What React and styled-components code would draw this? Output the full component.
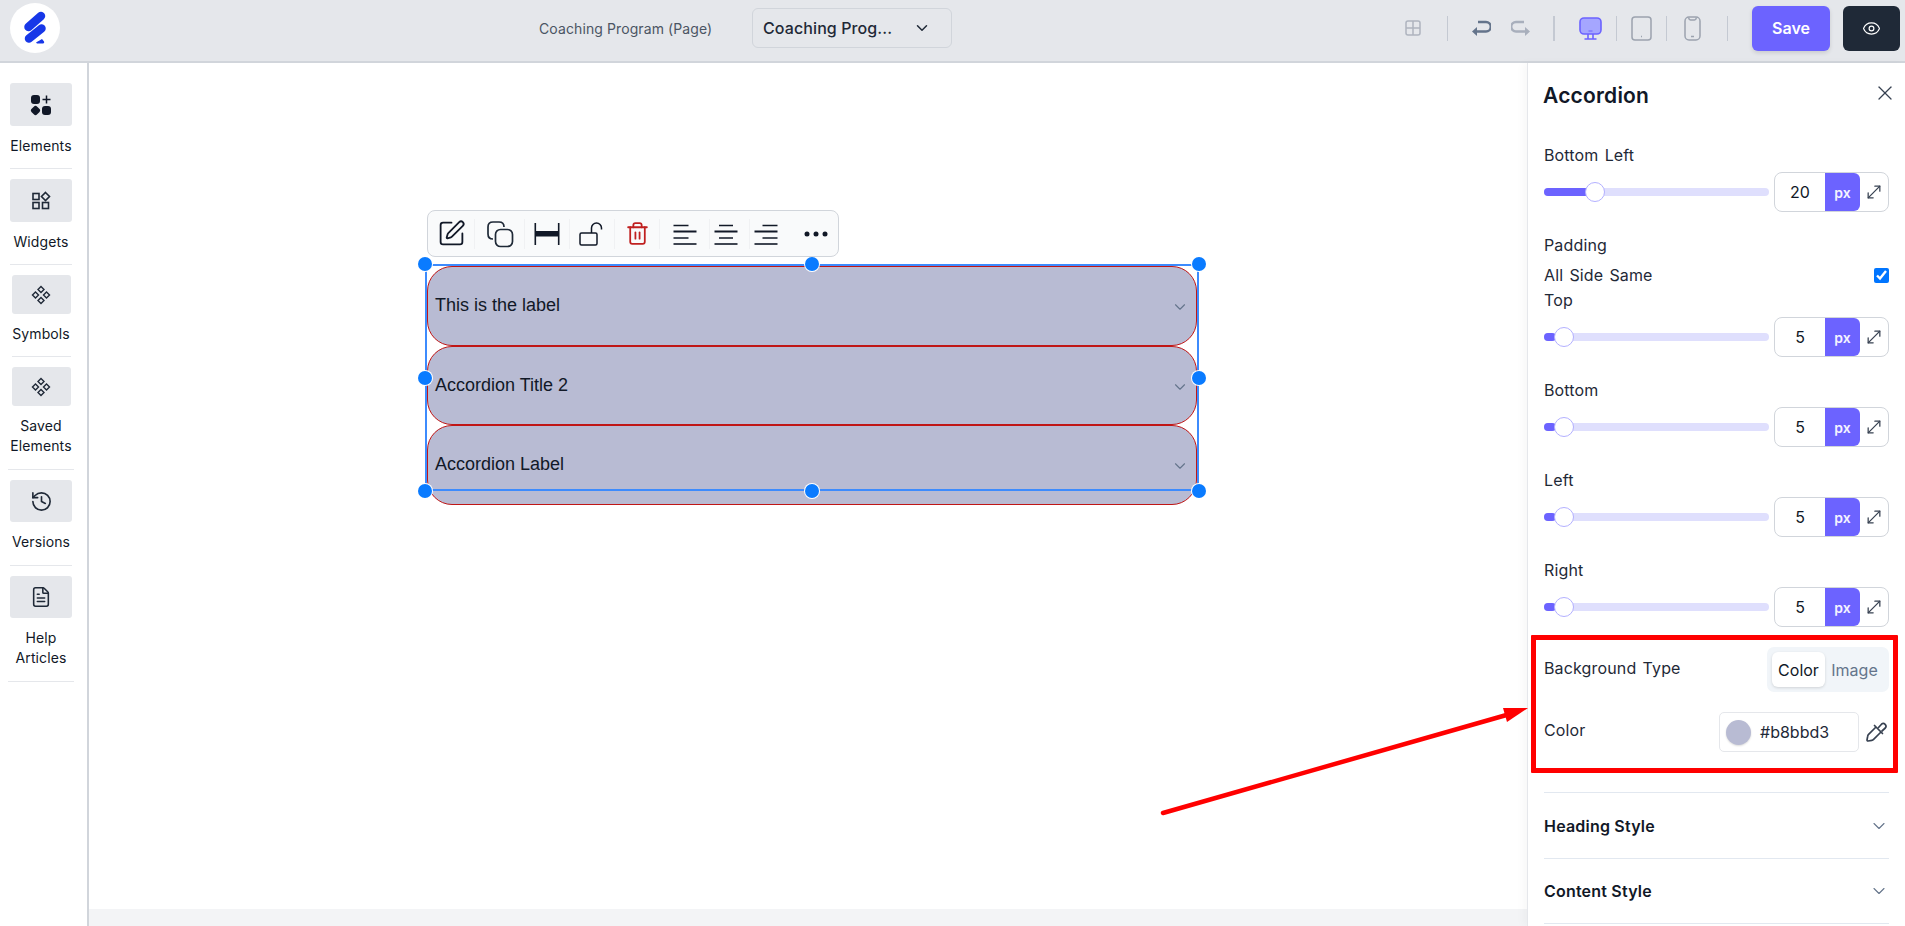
import React from 'react';
import styled, { createGlobalStyle } from 'styled-components';
import { ChevronDown, Eye, FileText, History, MoveDiagonal, SquarePen, Trash2, X } from 'lucide-react';

const PURPLE = '#6c63ff';
const INK = '#111827';

const navItems = [
  { label: ['Elements'], icon: 'elements', itemW: 62, btnW: 62, btnH: 43, pb: 12 },
  { label: ['Widgets'], icon: 'widgets', itemW: 62, btnW: 62, btnH: 43, pb: 12 },
  { label: ['Symbols'], icon: 'symbols', itemW: 59, btnW: 59, btnH: 39, pb: 12 },
  { label: ['Saved', 'Elements'], icon: 'symbols', itemW: 66, btnW: 59, btnH: 39, pb: 13 },
  { label: ['Versions'], icon: 'history', itemW: 62, btnW: 62, btnH: 42, pb: 13 },
  { label: ['Help', 'Articles'], icon: 'file', itemW: 66, btnW: 62, btnH: 42, pb: 13 },
];

const accordionTitles = ['This is the label', 'Accordion Title 2', 'Accordion Label'];

const handles = [
  { x: 0, y: 0 },
  { x: 50, y: 0 },
  { x: 100, y: 0 },
  { x: 0, y: 50 },
  { x: 100, y: 50 },
  { x: 0, y: 100 },
  { x: 50, y: 100 },
  { x: 100, y: 100 },
];

function NavIcon({ name }) {
  if (name === 'elements') {
    return (
      <svg width="22" height="22" viewBox="0 0 22 22" fill="#111827">
        <rect x="1" y="1" width="9" height="9" rx="3" />
        <path d="M16.5 1.5v8M12.5 5.5h8" stroke="#111827" strokeWidth="1.5" fill="none" />
        <rect x="1.6" y="12.6" width="7.8" height="7.8" rx="2.4" transform="rotate(45 5.5 16.5)" />
        <rect x="12" y="12" width="9" height="9" rx="3" />
      </svg>
    );
  }
  if (name === 'widgets') {
    return (
      <svg width="20" height="20" viewBox="0 0 20 20" fill="none" stroke="#1f2937" strokeWidth="1.6">
        <rect x="2" y="2.5" width="6" height="6" />
        <rect x="2" y="11.5" width="6" height="6" />
        <rect x="11.5" y="11.5" width="6" height="6" />
        <path d="M14.5 1.5l4 4-4 4-4-4z" />
      </svg>
    );
  }
  if (name === 'symbols') {
    return (
      <svg width="20" height="20" viewBox="0 0 20 20" fill="none" stroke="#1f2937" strokeWidth="1.4">
        <path d="M10 1.5l3 3-3 3-3-3z" />
        <path d="M10 12.5l3 3-3 3-3-3z" />
        <path d="M4.5 7l3 3-3 3-3-3z" />
        <path d="M15.5 7l3 3-3 3-3-3z" />
      </svg>
    );
  }
  if (name === 'history') return <History size={23} strokeWidth={1.7} color="#1f2937" />;
  return <FileText size={22} strokeWidth={1.7} color="#1f2937" />;
}

function Logo() {
  return (
    <svg width="50" height="50" viewBox="0 0 50 50">
      <circle cx="25" cy="25" r="25" fill="#fff" />
      <g stroke="#1737e8" strokeWidth="8.5" strokeLinecap="round">
        <path d="M18.5 24L31 13" />
        <path d="M19 35.5L31.5 25.5" />
      </g>
      <path d="M26 39.5l6-3.5 2 2.5c.6 1-.2 2-1 2h-6z" fill="#1737e8" />
    </svg>
  );
}

function AlignIcon({ kind }) {
  const short = { left: 'M0.5 2.5h15M0.5 15h15', center: 'M5 2.5h14M5 15h14', right: 'M8.5 2.5h15M8.5 15h15' };
  return (
    <svg width="24" height="22" viewBox="0 0 24 22" fill="none" stroke={INK}>
      <path d={short[kind]} strokeWidth="1.6" />
      <path d="M0.5 8.5h23" strokeWidth="2" />
      <path d="M0.5 21h23" strokeWidth="1.6" />
    </svg>
  );
}

function Dropper() {
  return (
    <svg width="22" height="22" viewBox="0 0 22 22" fill="none" stroke="#374151" strokeWidth="1.7" strokeLinejoin="round" strokeLinecap="round">
      <path d="M10.5 6.5L3.6 13.4c-.5.5-.8 1.100-.9 1.800L2 19c-.1.6.4 1.100 1 1l3.800-.7c.7-.1 1.300-.4 1.800-.9l6.900-6.900" />
      <path d="M9.500 4.500l8 8" />
      <path d="M13.500 6.500l3-3.300a2.700 2.700 0 0 1 3.800 3.800l-3.300 3" />
    </svg>
  );
}

function Slider({ pos, fill, value }) {
  return (
    <SliderRow>
      <Track>
        <Fill $w={fill} />
        <Thumb $pos={pos} />
      </Track>
      <Stepper>
        <StepValue>{value}</StepValue>
        <Unit>px</Unit>
        <ExpandSlot>
          <MoveDiagonal size={20} strokeWidth={1.5} color="#374151" />
        </ExpandSlot>
      </Stepper>
    </SliderRow>
  );
}

export default function App() {
  return (
    <>
      <GlobalStyle />
      <Page>
        <Header>
          <LogoSlot>
            <Logo />
          </LogoSlot>
          <PageName>Coaching Program (Page)</PageName>
          <PageSelect>
            <span>Coaching Prog...</span>
            <ChevronDown size={18} strokeWidth={2} color="#1f2937" />
          </PageSelect>
          <HeaderTools>
            <ToolGroup $w={70}>
              <svg width="16" height="16" viewBox="0 0 16 16" fill="none" stroke="#aeb4bf" strokeWidth="1.5">
                <rect x="1" y="1" width="14" height="14" rx="2" />
                <path d="M8 1v14M1 8h14" />
              </svg>
            </ToolGroup>
            <ToolGroup $w={107} $gap={20} $thick>
              <svg width="20" height="16" viewBox="0 0 20 16" fill="none" stroke="#64748b" strokeWidth="2.4">
                <path d="M5 11.5h10a4.2 4.2 0 0 0 0-9.500H7" />
                <path d="M6 7l-5 4.500L6 16z" fill="#64748b" stroke="none" />
              </svg>
              <svg width="20" height="16" viewBox="0 0 20 16" fill="none" stroke="#a8afbc" strokeWidth="2.4">
                <path d="M15 11.5H5A4.2 4.2 0 0 1 5 2h8" />
                <path d="M14 7l5 4.500L14 16z" fill="#a8afbc" stroke="none" />
              </svg>
            </ToolGroup>
            <ToolGroup $w={62} $pl={10}>
              <svg width="23" height="23" viewBox="0 0 23 23">
                <rect x="1" y="1" width="21" height="16" rx="4" fill="#a5a6ff" stroke={PURPLE} strokeWidth="1.6" />
                <path d="M9.5 14h4" stroke={PURPLE} strokeWidth="1" />
                <path d="M9 17v5M14 17v5M5.5 22h12" stroke={PURPLE} strokeWidth="1.6" fill="none" />
              </svg>
            </ToolGroup>
            <ToolGroup $w={50}>
              <svg width="21" height="25" viewBox="0 0 21 25" fill="none" stroke="#9ca3af" strokeWidth="1.5">
                <rect x="1" y="1" width="19" height="23" rx="3" />
                <path d="M10 20.5h1" />
              </svg>
            </ToolGroup>
            <ToolGroup $w={61} $pr={10}>
              <svg width="17" height="25" viewBox="0 0 17 25" fill="none" stroke="#9ca3af" strokeWidth="1.5">
                <rect x="1" y="1" width="15" height="23" rx="4" />
                <path d="M4.5 1.5c.5 2 1 2.500 2 2.500h4c1 0 1.500-.5 2-2.500M7 20.500h3" />
              </svg>
            </ToolGroup>
            <SaveButton>Save</SaveButton>
            <PreviewButton>
              <Eye size={19} strokeWidth={1.5} color="#fff" />
            </PreviewButton>
          </HeaderTools>
        </Header>

        <Body>
          <Sidebar>
            {navItems.map((item) => (
              <NavItem key={item.label.join(' ')} $w={item.itemW} $pb={item.pb}>
                <NavButton $w={item.btnW} $h={item.btnH}>
                  <NavIcon name={item.icon} />
                </NavButton>
                <NavLabel>
                  {item.label.map((line) => (
                    <div key={line}>{line}</div>
                  ))}
                </NavLabel>
              </NavItem>
            ))}
          </Sidebar>

          <CanvasColumn>
            <Canvas>
              <Accordion>
                {accordionTitles.map((title) => (
                  <AccordionItem key={title}>
                    <span>{title}</span>
                    <ItemChevron size={18} strokeWidth={1.5} color="#64748b" />
                  </AccordionItem>
                ))}
              </Accordion>

              <SelectionFrame>
                {handles.map((h) => (
                  <Handle key={`${h.x}-${h.y}`} $x={h.x} $y={h.y} />
                ))}
              </SelectionFrame>

              <FloatingToolbar>
                <BarSlot $w={47} $line>
                  <SquarePen size={29} strokeWidth={1.5} color={INK} />
                </BarSlot>
                <BarSlot $w={50} $line>
                  <svg width="28" height="28" viewBox="0 0 28 28" fill="none" stroke="#1f2937" strokeWidth="1.7">
                    <path d="M7 19c-3 0-5-2-5-5V7c0-3 2-5 5-5h6c3 0 5 2 5 5" />
                    <rect x="9.5" y="9.5" width="17" height="17" rx="5" />
                  </svg>
                </BarSlot>
                <BarSlot $w={45} $line>
                  <svg width="26" height="22" viewBox="0 0 26 22" fill={INK}>
                    <rect x="0.5" y="0" width="1.6" height="22" />
                    <rect x="23.9" y="0" width="1.6" height="22" />
                    <rect x="2" y="8" width="22" height="5.5" />
                  </svg>
                </BarSlot>
                <BarSlot $w={45} $line>
                  <svg width="26" height="24" viewBox="0 0 26 24" fill="none" stroke={INK} strokeWidth="1.5">
                    <rect x="1" y="11" width="17" height="12" rx="1.5" />
                    <path d="M12.5 11V6a5 5 0 0 1 10 0v1.500" />
                  </svg>
                </BarSlot>
                <BarSlot $w={45} $line>
                  <Trash2 size={25} strokeWidth={1.7} color="#c02020" />
                </BarSlot>
                <BarSlot $w={50} $line>
                  <AlignIcon kind="left" />
                </BarSlot>
                <BarSlot $w={40} $line $pr={8}>
                  <AlignIcon kind="center" />
                </BarSlot>
                <BarSlot $w={32}>
                  <AlignIcon kind="right" />
                </BarSlot>
                <BarSlot $w={56} $pl={12}>
                  <svg width="24" height="6" viewBox="0 0 24 6" fill={INK}>
                    <circle cx="3" cy="3" r="2.5" />
                    <circle cx="12" cy="3" r="2.5" />
                    <circle cx="21" cy="3" r="2.5" />
                  </svg>
                </BarSlot>
              </FloatingToolbar>
            </Canvas>
            <CanvasFooter />
          </CanvasColumn>

          <Panel>
            <PanelHead>
              <PanelTitle>Accordion</PanelTitle>
              <CloseIcon size={24} strokeWidth={1.3} color="#374151" />
            </PanelHead>

            <FieldLabel>Bottom Left</FieldLabel>
            <Slider pos={51} fill={51} value={20} />

            <FieldLabel $top={23}>Padding</FieldLabel>
            <CheckRow>
              <FieldLabel>All Side Same</FieldLabel>
              <Check type="checkbox" checked readOnly />
            </CheckRow>
            <FieldLabel $top={5}>Top</FieldLabel>
            <Slider pos={20} fill={12} value={5} />

            <FieldLabel $top={23}>Bottom</FieldLabel>
            <Slider pos={20} fill={12} value={5} />
            <FieldLabel $top={23}>Left</FieldLabel>
            <Slider pos={20} fill={12} value={5} />
            <FieldLabel $top={23}>Right</FieldLabel>
            <Slider pos={20} fill={12} value={5} />

            <BackgroundRow>
              <FieldLabel>Background Type</FieldLabel>
              <Segmented>
                <SegmentActive>Color</SegmentActive>
                <SegmentIdle>Image</SegmentIdle>
              </Segmented>
            </BackgroundRow>

            <ColorRow>
              <FieldLabel>Color</FieldLabel>
              <ColorControls>
                <ColorInput>
                  <Swatch />
                  <span>#b8bbd3</span>
                </ColorInput>
                <Dropper />
              </ColorControls>
            </ColorRow>

            <Section $first>
              <span>Heading Style</span>
              <ChevronDown size={20} strokeWidth={1.3} color="#64748b" />
            </Section>
            <Section $last>
              <span>Content Style</span>
              <ChevronDown size={20} strokeWidth={1.3} color="#64748b" />
            </Section>
          </Panel>
        </Body>

        <RedBox />
        <ArrowMark width="390" height="130" viewBox="0 0 390 130">
          <path d="M13 118L360 19" stroke="#ff0000" strokeWidth="4.5" strokeLinecap="round" />
          <path d="M378 13L353 13L357 27z" fill="#ff0000" />
        </ArrowMark>
      </Page>
    </>
  );
}

const GlobalStyle = createGlobalStyle`
  * { box-sizing: border-box; }
  html, body { margin: 0; padding: 0; background: #fff; }
  body { font-family: Inter, "Noto Sans", sans-serif; color: ${INK}; overflow: hidden; }
`;

const Page = styled.div`
  position: relative;
  width: 1905px;
  height: 926px;
  display: flex;
  flex-direction: column;
  overflow: hidden;
`;

const Header = styled.header`
  height: 63px;
  flex: none;
  padding-bottom: 5px;
  display: flex;
  align-items: center;
  background: #e5e7eb;
  border-bottom: 2px solid #d1d5db;
`;

const LogoSlot = styled.div`
  margin-left: 10px;
  width: 50px;
  height: 50px;
`;

const PageName = styled.div`
  margin-left: 479px;
  width: 173px;
  font-size: 14px;
  letter-spacing: 0.1px;
  color: #4b5563;
  white-space: nowrap;
`;

const PageSelect = styled.div`
  margin-left: 40px;
  width: 200px;
  height: 40px;
  padding: 0 20px 0 10px;
  display: flex;
  align-items: center;
  justify-content: space-between;
  border: 1px solid #d1d5db;
  border-radius: 6px;
  font-size: 16px;
  font-weight: 500;
  letter-spacing: 0.1px;
  color: #1f2937;
`;

const HeaderTools = styled.div`
  margin-left: auto;
  padding-right: 5px;
  display: flex;
  align-items: center;
`;

const ToolGroup = styled.div`
  width: ${(p) => p.$w}px;
  height: 25px;
  display: flex;
  align-items: center;
  justify-content: center;
  gap: ${(p) => p.$gap || 0}px;
  padding-left: ${(p) => p.$pl || 0}px;
  padding-right: ${(p) => p.$pr || 0}px;
  border-right: ${(p) => (p.$thick ? 2 : 1)}px solid #c4c9d2;
`;

const SaveButton = styled.div`
  margin-left: 24px;
  width: 78px;
  height: 45px;
  display: flex;
  align-items: center;
  justify-content: center;
  background: ${PURPLE};
  border-radius: 6px;
  color: #fff;
  font-size: 16px;
  font-weight: 600;
  box-shadow: 0 2px 4px rgba(0, 0, 0, 0.12);
`;

const PreviewButton = styled.div`
  margin-left: 13px;
  width: 57px;
  height: 45px;
  display: flex;
  align-items: center;
  justify-content: center;
  background: #1f2937;
  border-radius: 6px;
`;

const Body = styled.div`
  flex: 1;
  display: flex;
  min-height: 0;
`;

const Sidebar = styled.aside`
  width: 89px;
  flex: none;
  padding: 10px 5px 0 0;
  display: flex;
  flex-direction: column;
  align-items: center;
  border-right: 2px solid #d1d5db;
`;

const NavItem = styled.div`
  width: ${(p) => p.$w}px;
  padding: 10px 0 ${(p) => p.$pb}px;
  display: flex;
  flex-direction: column;
  align-items: center;
  border-bottom: 1px solid #e5e7eb;
`;

const NavButton = styled.div`
  width: ${(p) => p.$w}px;
  height: ${(p) => p.$h}px;
  display: flex;
  align-items: center;
  justify-content: center;
  background: #e5e7eb;
  border-radius: 3px;
`;

const NavLabel = styled.div`
  margin-top: 10px;
  font-size: 14px;
  line-height: 20px;
  letter-spacing: 0.1px;
  text-align: center;
  color: ${INK};
`;

const CanvasColumn = styled.div`
  flex: 1;
  display: flex;
  flex-direction: column;
  min-width: 0;
`;

const Canvas = styled.main`
  position: relative;
  flex: 1;
  padding: 203px 0 0 338px;
  background: #fff;
`;

const CanvasFooter = styled.div`
  height: 17px;
  background: #f3f4f6;
`;

const Accordion = styled.div`
  width: 770px;
  display: flex;
  flex-direction: column;
`;

const AccordionItem = styled.div`
  height: 79.5px;
  padding: 0 7px 0 7px;
  display: flex;
  align-items: center;
  justify-content: space-between;
  background: #b8bbd3;
  border: 1px solid #c01616;
  border-radius: 25px;
  font-family: "Liberation Sans", Arial, sans-serif;
  font-size: 18px;
  color: ${INK};
`;

const ItemChevron = styled(ChevronDown)`
  margin-top: 3px;
`;

const SelectionFrame = styled.div`
  position: absolute;
  left: 336px;
  top: 201px;
  width: 774px;
  height: 227px;
  outline: 2px solid #3d8bfd;
  outline-offset: -2px;
`;

const Handle = styled.span`
  position: absolute;
  left: ${(p) => p.$x}%;
  top: ${(p) => p.$y}%;
  width: 14px;
  height: 14px;
  transform: translate(-50%, -50%);
  border-radius: 50%;
  background: #0a7bff;
  box-shadow: 0 0 0 1px #fff;
`;

const FloatingToolbar = styled.div`
  position: absolute;
  left: 338px;
  top: 147px;
  width: 412px;
  height: 47px;
  display: flex;
  align-items: center;
  background: #f9fafb;
  border: 1px solid #d1d5db;
  border-radius: 8px;
`;

const BarSlot = styled.div`
  width: ${(p) => p.$w}px;
  height: 30px;
  flex: none;
  display: flex;
  align-items: center;
  justify-content: center;
  padding-right: ${(p) => p.$pr || 0}px;
  padding-left: ${(p) => p.$pl || 0}px;
  border-right: ${(p) => (p.$line ? '1px solid #f0f1f3' : 'none')};
`;

const Panel = styled.aside`
  position: relative;
  width: 378px;
  flex: none;
  padding: 0 16px;
  background: #fff;
  border-left: 1px solid #e5e7eb;
  box-shadow: -4px 0 8px rgba(0, 0, 0, 0.03);
`;

const PanelHead = styled.div`
  height: 82px;
  padding-bottom: 18px;
  margin: 0 -8px 0 -1px;
  display: flex;
  align-items: center;
  justify-content: space-between;
`;

const PanelTitle = styled.div`
  font-size: 21px;
  font-weight: 600;
  letter-spacing: 0.2px;
  color: ${INK};
`;

const CloseIcon = styled(X)`
  margin-bottom: 4px;
`;

const FieldLabel = styled.div`
  margin-top: ${(p) => p.$top || 0}px;
  font-size: 16px;
  line-height: 20px;
  word-spacing: 1.5px;
  letter-spacing: 0.15px;
  color: #1f2937;
`;

const SliderRow = styled.div`
  margin-top: 7px;
  height: 40px;
  display: flex;
  align-items: center;
  justify-content: space-between;
`;

const Track = styled.div`
  position: relative;
  width: 225px;
  height: 8px;
  background: #dfdffd;
  border-radius: 4px;
`;

const Fill = styled.div`
  width: ${(p) => p.$w}px;
  height: 100%;
  background: ${PURPLE};
  border-radius: 4px;
`;

const Thumb = styled.span`
  position: absolute;
  left: ${(p) => p.$pos}px;
  top: 50%;
  width: 20px;
  height: 20px;
  transform: translate(-50%, -50%);
  background: #fff;
  border: 1px solid #b3b0ff;
  border-radius: 50%;
`;

const Stepper = styled.div`
  width: 115px;
  height: 40px;
  display: flex;
  align-items: stretch;
  border: 1px solid #d1d5db;
  border-radius: 8px;
`;

const StepValue = styled.div`
  width: 50px;
  display: flex;
  align-items: center;
  justify-content: center;
  font-size: 16px;
  color: ${INK};
`;

const Unit = styled.div`
  width: 35px;
  display: flex;
  align-items: center;
  justify-content: center;
  background: ${PURPLE};
  border-radius: 0 6px 6px 0;
  color: #f4f3ff;
  font-size: 14px;
  font-weight: 600;
`;

const ExpandSlot = styled.div`
  flex: 1;
  display: flex;
  align-items: center;
  justify-content: center;
`;

const CheckRow = styled.div`
  margin-top: 10px;
  display: flex;
  align-items: center;
  justify-content: space-between;
`;

const Check = styled.input`
  margin: 0;
  width: 15px;
  height: 15px;
  accent-color: #0075ff;
`;

const BackgroundRow = styled.div`
  margin-top: 20px;
  display: flex;
  align-items: flex-start;
  justify-content: space-between;

  & > div:first-child {
    margin-top: 11px;
  }
`;

const Segmented = styled.div`
  width: 122px;
  height: 45px;
  padding: 5px;
  display: flex;
  align-items: stretch;
  background: #f1f5f9;
  border-radius: 7px;
`;

const SegmentActive = styled.div`
  width: 53px;
  display: flex;
  align-items: center;
  justify-content: center;
  background: #fff;
  border-radius: 6px;
  box-shadow: 0 1px 3px rgba(0, 0, 0, 0.14);
  font-size: 16px;
  color: ${INK};
`;

const SegmentIdle = styled.div`
  flex: 1;
  display: flex;
  align-items: center;
  justify-content: center;
  font-size: 16px;
  color: #64748b;
`;

const ColorRow = styled.div`
  margin-top: 20px;
  display: flex;
  align-items: flex-start;
  justify-content: space-between;

  & > div:first-child {
    margin-top: 8px;
  }
`;

const ColorControls = styled.div`
  display: flex;
  align-items: center;
  gap: 6px;
  padding-right: 2px;
`;

const ColorInput = styled.div`
  width: 140px;
  height: 40px;
  padding: 0 6px;
  display: flex;
  align-items: center;
  gap: 9px;
  border: 1px solid #e5e7eb;
  border-radius: 5px;
  font-size: 16px;
  color: #1f2937;
`;

const Swatch = styled.span`
  width: 25px;
  height: 25px;
  border-radius: 50%;
  background: #b8bbd3;
  box-shadow: 0 1px 2px rgba(0, 0, 0, 0.15);
`;

const Section = styled.div`
  height: 66px;
  margin-top: ${(p) => (p.$first ? 40 : 0)}px;
  display: flex;
  align-items: center;
  justify-content: space-between;
  border-top: 1px solid #e2e8f0;
  border-bottom: ${(p) => (p.$last ? '1px solid #e2e8f0' : 'none')};
  font-size: 16px;
  font-weight: 600;
  letter-spacing: 0.2px;
  color: ${INK};
`;

const RedBox = styled.div`
  position: absolute;
  left: 1531px;
  top: 635px;
  width: 367px;
  height: 138px;
  border: 5px solid #ff0000;
  border-radius: 1px;
`;

const ArrowMark = styled.svg`
  position: absolute;
  left: 1150px;
  top: 695px;
  pointer-events: none;
`;
